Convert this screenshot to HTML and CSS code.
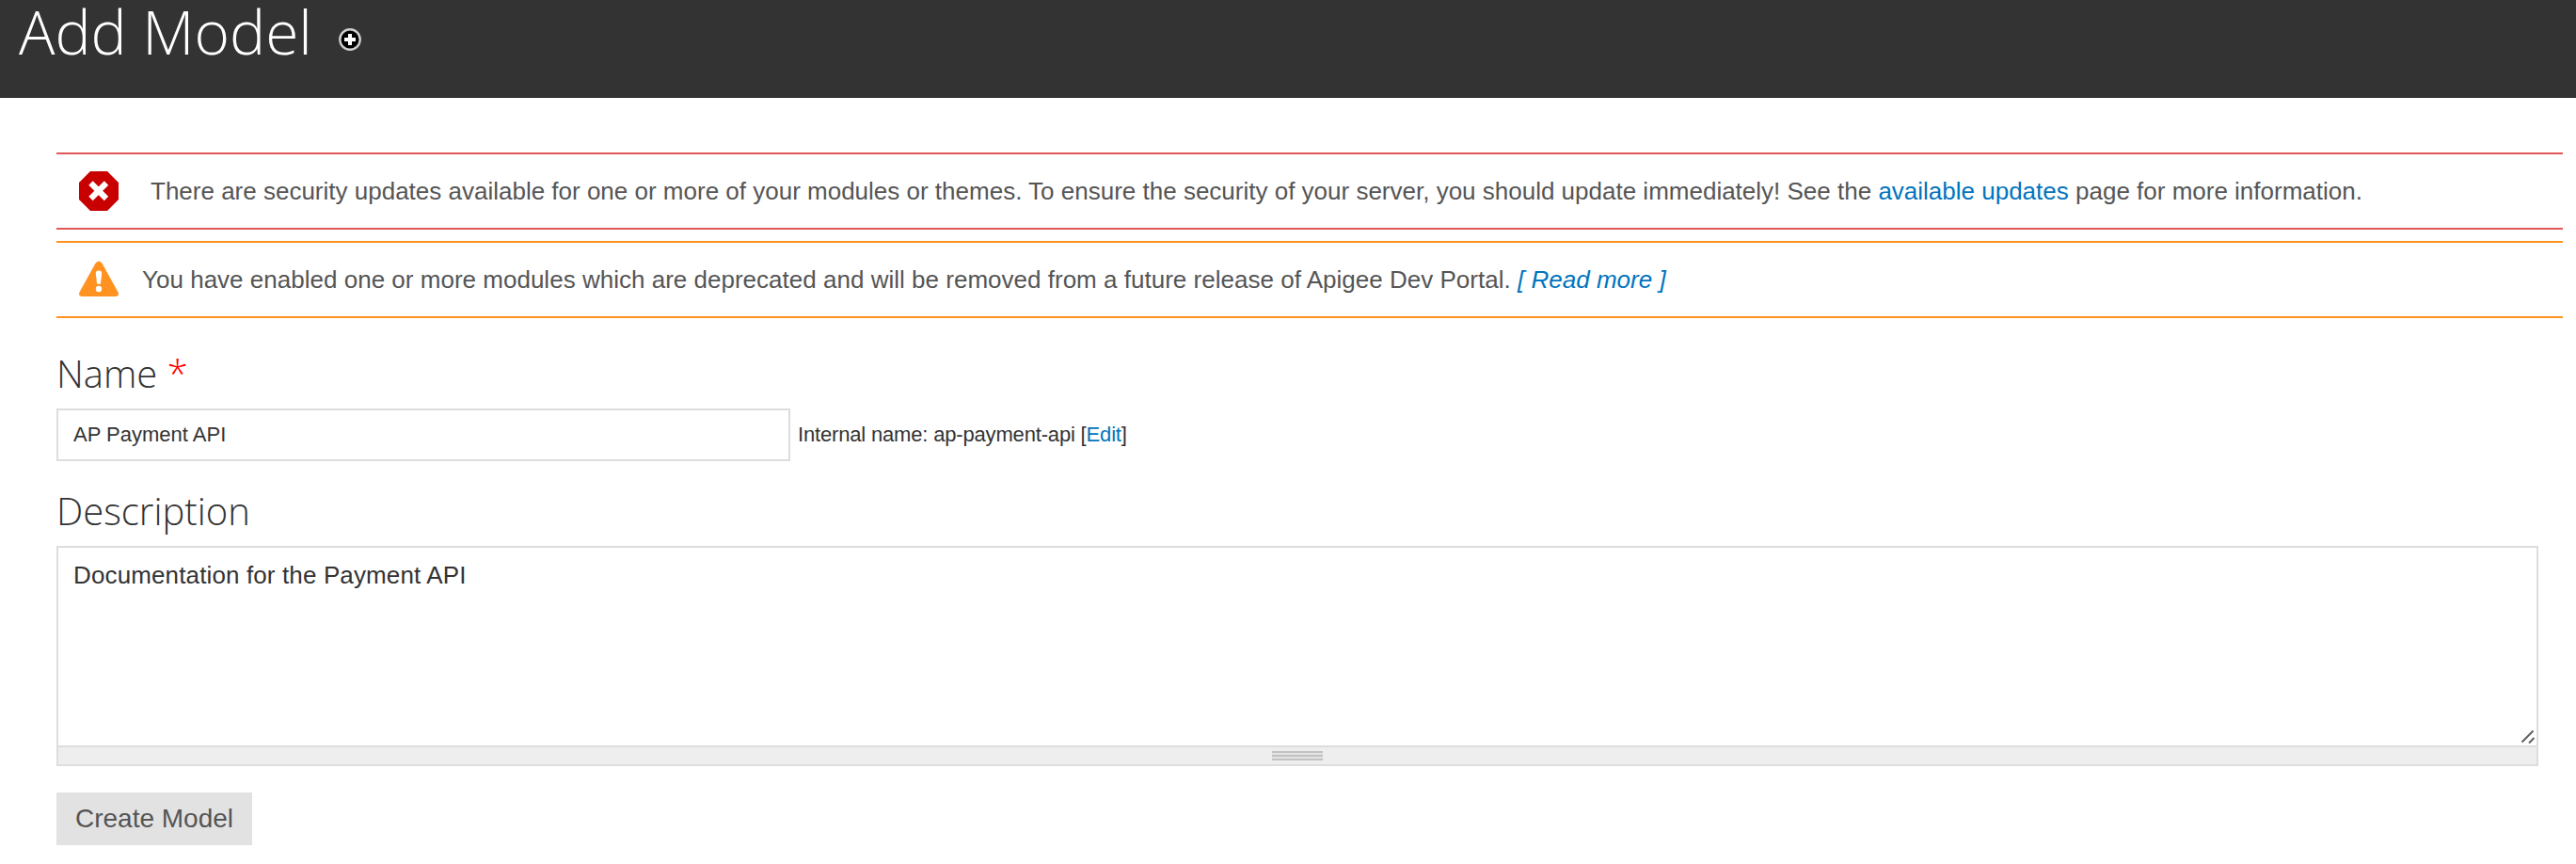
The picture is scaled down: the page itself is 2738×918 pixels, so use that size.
FILE: index.html
```html
<!DOCTYPE html>
<html lang="en">
<head>
<meta charset="utf-8">
<title>Add Model</title>
<link rel="stylesheet" href="styles.css">
</head>
<body>
<header class="branding">
  <h1 class="page-title">Add Model</h1>
  <a class="add-shortcut" aria-label="Add to shortcuts">
    <svg viewBox="0 0 24 24" width="24" height="24"><circle cx="12" cy="12" r="10.7" fill="#000" stroke="#cecece" stroke-width="2.4"/><path d="M12 6v12M6 12h12" stroke="#fff" stroke-width="4"/></svg>
  </a>
</header>
<main class="page">
  <div class="message error">
    <svg class="message-icon" viewBox="0 0 42 42" width="42" height="42"><path d="M12 0H30L42 12V30L30 42H12L0 30V12Z" fill="#c80000"/><path d="M12.5 12.5L29 29M29 12.5L12.5 29" stroke="#fff" stroke-width="6.2"/></svg>
    <p class="message-text">There are security updates available for one or more of your modules or themes. To ensure the security of your server, you should update immediately! See the <a class="link">available updates</a> page for more information.</p>
  </div>
  <div class="message warning">
    <svg class="message-icon" viewBox="0 0 42 42" width="42" height="42"><path d="M17.2 4.2Q21 -1.4 24.8 4.2L41.4 34.2Q43.300 38.900 38.500 39H3.500Q-1.300 38.900 .6 34.200Z" fill="#ff9220"/><path d="M21 11.500Q24.400 11.500 24.200 14.500L22.900 25.800H19.100L17.800 14.500Q17.600 11.500 21 11.500Z" fill="#fff"/><circle cx="21" cy="31" r="3.200" fill="#fff"/></svg>
    <p class="message-text">You have enabled one or more modules which are deprecated and will be removed from a future release of Apigee Dev Portal. <a class="link"><em>[ Read more ]</em></a></p>
  </div>
  <form class="model-form">
    <label class="label" for="name">Name <span class="required">*</span></label>
    <div class="name-row">
      <input class="name-input" id="name" type="text" value="AP Payment API">
      <span class="machine-name">Internal name: ap-payment-api [<a class="link">Edit</a>]</span>
    </div>
    <label class="label description-label" for="description">Description</label>
    <div class="textarea-wrap">
      <textarea class="description" id="description">Documentation for the Payment API</textarea>
      <svg class="resizer" viewBox="0 0 16 16" width="16" height="16"><path d="M1.500 13.500L13.500 1.500M9 14.500L14.500 9" stroke="#606060" stroke-width="2"/></svg>
    </div>
    <div class="grippie"><div class="grip"></div></div>
    <button class="submit" type="button">Create Model</button>
  </form>
</main>
</body>
</html>
```
FILE: styles.css
```css
* { box-sizing: border-box; }
body {
  margin: 0;
  background: #fff;
  color: #333;
  font-family: "Liberation Sans", Helvetica, Arial, sans-serif;
}
.branding {
  display: flex;
  align-items: flex-start;
  height: 104px;
  padding-left: 20px;
  background: #333;
  border-bottom: 1px solid #2e2a2c;
}
.page-title {
  margin: 0;
  padding-top: 1px;
  color: #fff;
  font: 300 64px/66px "Open Sans", sans-serif;
}
.add-shortcut { margin: 30px 0 0 28px; height: 24px; }
.add-shortcut svg { display: block; }
.page { padding: 58px 14px 0 60px; }
.message {
  display: flex;
  align-items: center;
  height: 82px;
  margin-bottom: 12px;
  padding-left: 24px;
  border: solid;
  border-width: 2px 0;
}
.error { border-color: #e05858; gap: 34px; }
.warning { border-color: #ff9220; gap: 25px; letter-spacing: 0.014px; }
.message-icon { flex: none; }
.message-text { margin: 0; color: #555; font-size: 26px; line-height: 36px; white-space: nowrap; }
.link { color: #0074bd; text-decoration: none; }
.model-form { padding-right: 26px; }
.label { display: block; padding: 19px 0 1px; font: 300 40px/56px "Open Sans", sans-serif; }
.required { color: #f00; }
.name-row { display: flex; align-items: center; gap: 8px; height: 56px; margin-top: 8px; }
.name-input {
  width: 780px;
  height: 56px;
  padding: 0 16px;
  border: 2px solid #ddd;
  color: #333;
  font: 22px "Liberation Sans", Helvetica, Arial, sans-serif;
  outline: none;
}
.machine-name { font-size: 22px; line-height: 30px; letter-spacing: -0.17px; white-space: nowrap; }
.description-label { margin-top: 6px; }
.textarea-wrap { position: relative; height: 214px; margin-top: 8px; }
.description {
  display: block;
  width: 100%;
  height: 214px;
  padding: 12px 16px;
  border: 2px solid #ddd;
  color: #333;
  font: 26px/34px "Liberation Sans", Helvetica, Arial, sans-serif;
  letter-spacing: 0.13px;
  outline: none;
  resize: none;
}
.resizer { position: absolute; right: 3px; bottom: 3px; }
.grippie {
  display: flex;
  align-items: center;
  justify-content: center;
  height: 20px;
  background: #eee;
  border: 2px solid #ddd;
  border-top: 0;
}
.grip {
  width: 54px;
  height: 10px;
  background: repeating-linear-gradient(#c2c2c2 0 2px, #e2e2e2 2px 4px);
}
.submit {
  display: block;
  width: 208px;
  height: 56px;
  margin-top: 28px;
  padding: 0;
  border: 0;
  background: #e2e2e2;
  color: #555;
  font: 28px "Liberation Sans", Helvetica, Arial, sans-serif;
}
```
